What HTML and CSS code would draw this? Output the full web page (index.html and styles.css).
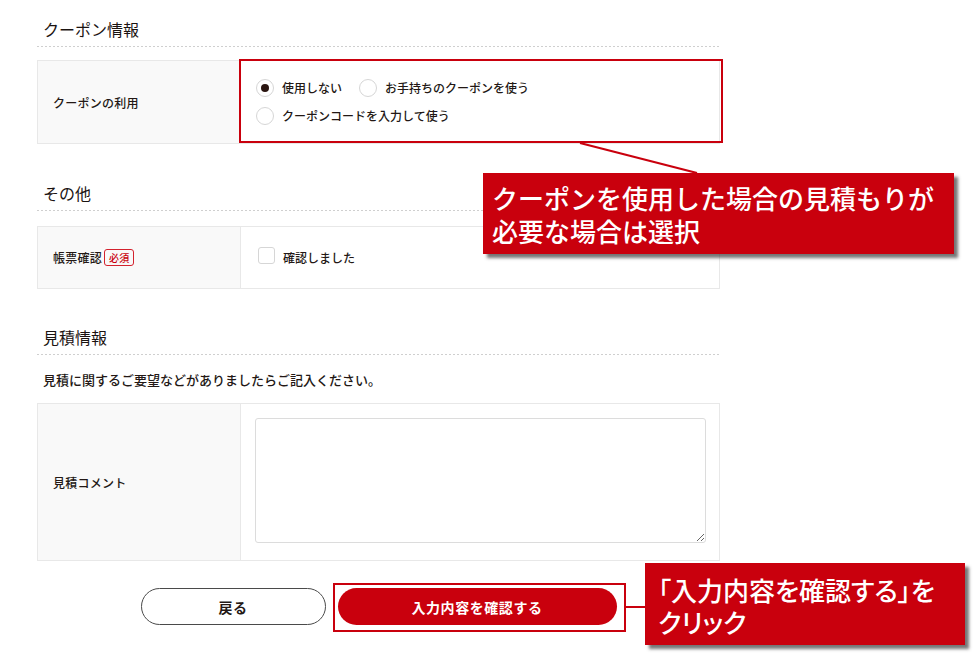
FILE: index.html
```html
<!DOCTYPE html>
<html lang="ja">
<head>
<meta charset="utf-8">
<title>見積フォーム</title>
<link rel="stylesheet" href="styles.css">
</head>
<body>
<div class="page">
  <section class="sec sec-first">
    <h2 class="sec-title">クーポン情報</h2>
    <div class="form-table">
      <div class="th">クーポンの利用</div>
      <div class="td td-radios">
        <div class="radio-row">
          <label class="radio"><span class="radio-mark checked"></span>使用しない</label>
          <label class="radio"><span class="radio-mark"></span>お手持ちのクーポンを使う</label>
        </div>
        <div class="radio-row">
          <label class="radio"><span class="radio-mark"></span>クーポンコードを入力して使う</label>
        </div>
      </div>
    </div>
  </section>

  <section class="sec">
    <h2 class="sec-title">その他</h2>
    <div class="form-table form-table-short">
      <div class="th">帳票確認<span class="badge">必須</span></div>
      <div class="td td-check">
        <label class="check"><span class="check-mark"></span>確認しました</label>
      </div>
    </div>
  </section>

  <section class="sec sec-estimate">
    <h2 class="sec-title">見積情報</h2>
    <p class="lead">見積に関するご要望などがありましたらご記入ください。</p>
    <div class="form-table form-table-tall">
      <div class="th">見積コメント</div>
      <div class="td td-textarea">
        <textarea class="comment"></textarea>
      </div>
    </div>
  </section>

  <div class="actions">
    <button class="btn btn-back">戻る</button>
    <button class="btn btn-confirm">入力内容を確認する</button>
  </div>
</div>

<div class="hl hl-coupon"></div>
<div class="hl hl-button"></div>
<svg class="connector" width="980" height="654" viewBox="0 0 980 654">
  <line x1="580" y1="143" x2="697" y2="173" stroke="#c9000d" stroke-width="2.2"/>
  <line x1="625" y1="607" x2="646" y2="607" stroke="#c9000d" stroke-width="2"/>
</svg>
<div class="callout callout-coupon">クーポンを使用した場合の見積もりが<br>必要な場合は選択</div>
<div class="callout callout-button">「入力内容を確認する」を<br>クリック</div>
</body>
</html>
```

FILE: styles.css
```css
* { box-sizing: border-box; }

html, body {
  margin: 0;
  padding: 0;
  background: #fff;
}

body {
  font-family: "Noto Sans CJK JP", "Noto Sans", sans-serif;
  color: #231815;
  width: 980px;
  height: 654px;
  overflow: hidden;
  position: relative;
}

.page {
  width: 720px;
  padding: 18px 0 0 37px;
}

.sec { margin-top: 38px; }
.sec-first { margin-top: 0; }
.sec-estimate { margin-top: 37px; }

.sec-title {
  margin: 0;
  font-size: 16px;
  line-height: 22px;
  font-weight: 400;
  padding: 0 0 7px 6px;
  background-image: linear-gradient(to right, #cfcfcf 50%, transparent 50%);
  background-size: 4px 1px;
  background-repeat: repeat-x;
  background-position: left bottom;
  color: #1a1311;
}

.form-table {
  margin-top: 15px;
  display: grid;
  grid-template-columns: 203px 1fr;
  border: 1px solid #e8e8e8;
  min-height: 84px;
}
.sec-first .form-table { margin-top: 13px; }
.form-table-short { min-height: 63px; }
.form-table-tall { min-height: 158px; margin-top: 13px; }

.th {
  background: #f9f9f9;
  border-right: 1px solid #e8e8e8;
  display: flex;
  align-items: center;
  padding-left: 15px;
  font-size: 12px;
  font-weight: 500;
  letter-spacing: 0.02em;
}

.td { font-size: 12px; font-weight: 500; }

.td-radios {
  padding: 18px 14px 16px 15px;
  display: flex;
  flex-direction: column;
  gap: 10px;
}
.radio-row { display: flex; gap: 17px; height: 18px; align-items: center; }
.radio { display: flex; align-items: center; gap: 8px; line-height: 18px; }
.radio-mark {
  width: 18px;
  height: 18px;
  border-radius: 50%;
  border: 1px solid #d6d6d6;
  background: #fff;
  display: flex;
  align-items: center;
  justify-content: center;
}
.radio-mark.checked::after {
  content: "";
  width: 8px;
  height: 8px;
  border-radius: 50%;
  background: #2a1510;
}

.td-check {
  display: flex;
  align-items: center;
  padding-left: 17px;
}
.check { display: flex; align-items: center; gap: 8px; }
.check-mark {
  width: 17px;
  height: 17px;
  border: 1px solid #d6d6d6;
  border-radius: 3px;
  background: #fff;
  margin-top: -4px;
}

.badge {
  display: inline-block;
  margin-left: 2px;
  border: 1px solid #d3222e;
  color: #c9000d;
  border-radius: 3px;
  font-size: 10px;
  line-height: 15px;
  padding: 0 4px;
  font-weight: 500;
}

.lead {
  margin: 15px 0 0 6px;
  font-size: 13px;
  line-height: 20px;
  font-weight: 500;
}

.td-textarea { padding: 14px 13px 17px 14px; }
.comment {
  display: block;
  width: 100%;
  height: 125px;
  border: 1px solid #dcdcdc;
  border-radius: 3px;
  resize: vertical;
  background: #fff;
  margin: 0;
}

.actions {
  margin-top: 27px;
  display: flex;
  justify-content: center;
  gap: 12px;
}
.btn {
  height: 37px;
  border-radius: 19px;
  font-family: "Noto Sans CJK JP", "Noto Sans", sans-serif;
  font-size: 14px;
  font-weight: 700;
  letter-spacing: 0.04em;
  cursor: pointer;
}
.btn-back {
  width: 185px;
  background: #fff;
  border: 1px solid #4a4a4a;
  color: #231815;
}
.btn-confirm {
  width: 279px;
  background: #c9000d;
  border: none;
  color: #fff;
}

/* annotation overlays */
.hl {
  position: absolute;
  border: 2px solid #c9000d;
}
.hl-coupon { left: 239px; top: 59px; width: 484px; height: 84px; }
.hl-button { left: 333px; top: 583px; width: 293px; height: 49px; }

.connector {
  position: absolute;
  left: 0;
  top: 0;
  pointer-events: none;
}

.callout {
  position: absolute;
  background: #c9000d;
  color: #fff;
  font-weight: 500;
  box-shadow: 4px 4px 3px rgba(60, 60, 60, 0.7);
  white-space: nowrap;
}
.callout-coupon {
  left: 483px;
  top: 173px;
  width: 471px;
  height: 81px;
  font-size: 26px;
  line-height: 33px;
  padding: 8px 0 0 9px;
}
.callout-button {
  left: 645px;
  top: 563px;
  width: 320px;
  height: 82px;
  font-size: 26px;
  line-height: 32px;
  padding: 11px 0 0 13px;
  font-feature-settings: "palt";
}
```
